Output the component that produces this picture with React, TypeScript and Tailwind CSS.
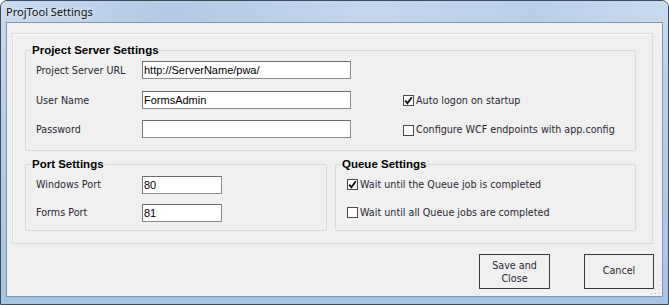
import React from "react";

const TextBox = ({ value, className }: { value: string; className: string }) => (
  <input
    readOnly
    value={value}
    className={`h-[18px] border border-[#8c8c8c] border-t-[#6e6e6e] border-l-[#767676] bg-white px-px text-[11px] text-black outline-none font-['Liberation_Sans',Arial,sans-serif] ${className}`}
  />
);

const Check = ({ checked, label }: { checked?: boolean; label: string }) => (
  <label className="flex items-center gap-[2px]">
    <span className="w-[11px] h-[11px] border border-[#4a4a4a] bg-white flex items-center justify-center">
      {checked && (
        <svg width="9" height="9" viewBox="0 0 9 9">
          <path d="M1.2 4.6 L3.4 7.2 L7.8 1.2" stroke="#111" strokeWidth="1.9" fill="none" />
        </svg>
      )}
    </span>
    <span>{label}</span>
  </label>
);

const Legend = ({ children }: { children: React.ReactNode }) => (
  <legend className="ml-[5px] px-px text-[11.5px] font-bold leading-[14px] text-black font-['Liberation_Sans',Arial,sans-serif]">
    {children}
  </legend>
);

export default function App() {
  return (
    <div className="w-[669px] h-[305px] flex flex-col border border-[#3e4b5a] rounded-t-[7px] overflow-hidden px-[5px] pb-[7px] bg-[linear-gradient(180deg,#c6d9ee_0%,#b7cee8_40%,#a9c3e2_100%)]">
      {/* title bar */}
      <div className="h-[21px] flex items-center bg-[linear-gradient(90deg,#c9dbee_0%,#b2cae6_25%,#c3d6ec_55%,#b9cfe9_80%,#c8daee_100%)] -mx-[5px] px-[5px]">
        <span className="mt-px text-[11px] text-[#111] font-['Noto_Sans',sans-serif] [text-shadow:0_0_6px_#ffffff]">ProjTool Settings</span>
      </div>

      {/* client area */}
      <div className="relative flex-1 flex flex-col border border-[#8496ab] bg-[#f0f0f0] text-[9.6px] text-[#2d2733] font-['DejaVu_Sans',Verdana,sans-serif]">
        <div className="mt-[10px] ml-[5px] mr-[9px] border border-[#d6dcdf] shadow-[inset_1px_1px_0_#fafafa] pl-[12px] pr-[16px] pt-[9px] pb-[12px] flex flex-col gap-[6px]">
          {/* Project Server Settings */}
          <fieldset className="h-[108px] border border-[#d2dbe0] rounded-[2px]">
            <Legend>Project Server Settings</Legend>
            <div className="pl-[10px] pt-[4px] flex flex-col gap-[11.5px]">
              <div className="h-[18px] flex items-center">
                <span className="w-[106px] mt-[3px]">Project Server URL</span>
                <TextBox value="http://ServerName/pwa/" className="w-[209px]" />
              </div>
              <div className="h-[18px] flex items-center">
                <span className="w-[106px] mt-[3px]">User Name</span>
                <TextBox value="FormsAdmin" className="w-[209px]" />
                <div className="ml-[52px] mt-[3px]">
                  <Check checked label="Auto logon on startup" />
                </div>
              </div>
              <div className="h-[18px] flex items-center">
                <span className="w-[106px] mt-[3px]">Password</span>
                <TextBox value="" className="w-[209px]" />
                <div className="ml-[52px] mt-[3px]">
                  <Check label="Configure WCF endpoints with app.config" />
                </div>
              </div>
            </div>
          </fieldset>

          <div className="flex gap-[8px]">
            {/* Port Settings */}
            <fieldset className="w-[302px] h-[74px] border border-[#d2dbe0] rounded-[2px]">
              <Legend>Port Settings</Legend>
              <div className="pl-[10px] pt-[5px] flex flex-col gap-[10px]">
                <div className="h-[18px] flex items-center">
                  <span className="w-[106px]">Windows Port</span>
                  <TextBox value="80" className="w-[80px]" />
                </div>
                <div className="h-[18px] flex items-center">
                  <span className="w-[106px]">Forms Port</span>
                  <TextBox value="81" className="w-[80px]" />
                </div>
              </div>
            </fieldset>

            {/* Queue Settings */}
            <fieldset className="flex-1 h-[74px] border border-[#d2dbe0] rounded-[2px]">
              <Legend>Queue Settings</Legend>
              <div className="pl-[11px] pt-[5px] flex flex-col gap-[10px]">
                <div className="h-[18px] flex items-center">
                  <Check checked label="Wait until the Queue job is completed" />
                </div>
                <div className="h-[18px] flex items-center">
                  <Check label="Wait until all Queue jobs are completed" />
                </div>
              </div>
            </fieldset>
          </div>
        </div>

        {/* buttons */}
        <div className="mt-[10px] pr-[8px] flex justify-end gap-[34px]">
          <button className="w-[71px] h-[35px] border border-[#3a3540] bg-[#f0f0f0] leading-[13px] text-[#2d2733]">
            Save and
            <br />
            Close
          </button>
          <button className="w-[70px] h-[35px] border border-[#3a3540] bg-[#f0f0f0] text-[#2d2733]">Cancel</button>
        </div>

        {/* size grip */}
        <svg className="absolute right-[1px] bottom-[1px]" width="11" height="11" viewBox="0 0 11 11">
          {[
            [9, 1], [9, 5], [5, 5], [9, 9], [5, 9], [1, 9],
          ].map(([x, y], i) => (
            <g key={i}>
              <rect x={x} y={y} width="1" height="1" fill="#b8bcc2" />
              <rect x={x + 1} y={y + 1} width="1" height="1" fill="#ffffff" />
            </g>
          ))}
        </svg>
      </div>
    </div>
  );
}
